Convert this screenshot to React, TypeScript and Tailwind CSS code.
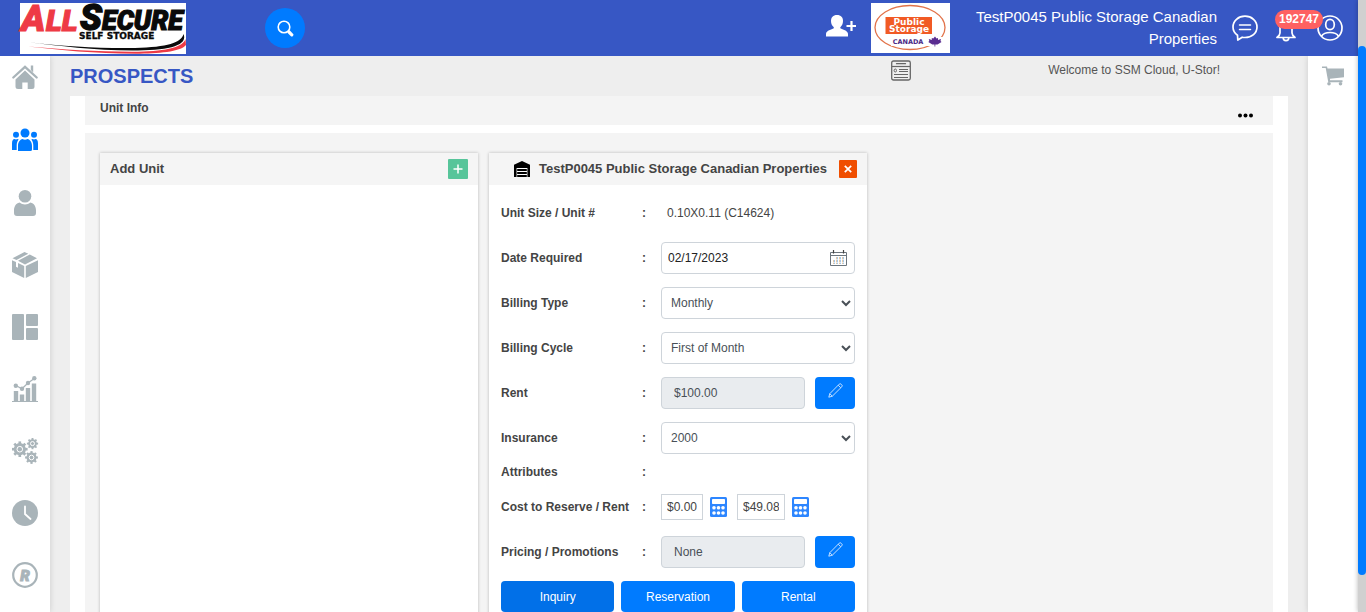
import type { ReactNode } from "react";

function AllSecureLogo() {
  return (
    <svg width="166" height="51" viewBox="0 0 166 51" role="img" aria-label="All Secure Self Storage" className="block overflow-visible bg-white">
      <g fontFamily="Roboto, 'Liberation Sans', sans-serif" fontWeight="900" fontStyle="italic">
        <g fill="#ee3a45" stroke="#ee3a45">
          <text x="1" y="28" fontSize="37" strokeWidth="1">A</text>
          <text x="26" y="28" fontSize="30" strokeWidth="1.2">LL</text>
        </g>
        <g fill="#0a0a0a" stroke="#0a0a0a">
          <text x="60" y="27" fontSize="36" strokeWidth="1.4">S</text>
          <text x="82" y="27" fontSize="27" strokeWidth="1.2">ECURE</text>
        </g>
      </g>
      <text x="59" y="36" fontSize="9" fontWeight="700" fontFamily="'DejaVu Sans', sans-serif" fill="#0a0a0a" stroke="#0a0a0a" strokeWidth=".3">SELF STORAGE</text>
      <path d="M7 39C45 43.500 80 45.500 115 45C148 44 161 40 163.500 31C168 42 151 47 118 47.500C78 48 40 43 7 39Z" fill="#0a0a0a" />
      <path d="M8 43.500C45 46.500 80 49 118 48.700C148 48 163 44 165.500 36L166 42C160 49 138 50.500 116 50.700C74 50.700 40 47 8 43.500Z" fill="#ee3a45" />
    </svg>
  );
}

function PublicStorageLogo() {
  return (
    <svg width="79" height="50" viewBox="0 0 79 50" role="img" aria-label="Public Storage Canada" className="block shrink-0 bg-white">
      <ellipse cx="39" cy="24.500" rx="35" ry="22" fill="none" stroke="#e2734a" strokeWidth="1.300" />
      <rect x="14.500" y="14" width="46.500" height="17" fill="#f15a24" />
      <g fontFamily="'DejaVu Sans', sans-serif" fontWeight="700" textAnchor="middle">
        <text x="38" y="21.500" fontSize="9" fill="#fff">Public</text>
        <text x="38" y="29" fontSize="9" fill="#fff">Storage</text>
        <rect x="20" y="34" width="54" height="9" fill="#fff" />
        <text x="37" y="41" fontSize="6.500" fill="#4b2a86">CANADA</text>
      </g>
      <path d="M64 33.500l1.500 2 1.500-.5v2l3-1-.5 2 1 1-4 2.500h-2.200v2h-.8v-2h-2.200l-4-2.500 1-1-.5-2 3 1v-2l1.500.5z" fill="#5a2d91" />
    </svg>
  );
}

const searchIcon = (
  <svg width="17" height="17" viewBox="0 0 17 17" fill="none" stroke="#fff" strokeLinecap="round">
    <circle cx="7" cy="7" r="5.800" strokeWidth="1.600" />
    <path d="M12 12l2.800 2.800" strokeWidth="3.200" />
  </svg>
);

const addUserIcon = (
  <svg width="31" height="24" viewBox="0 0 31 24" fill="#fff">
    <path d="M11 1c4 0 6 2.400 6 6 0 2.800-1.200 5-2.700 6.200v1c2.500 1.500 7.200 2 7.700 5.500v2.800H0v-2.800C.5 16.200 5.500 15.700 7.800 14.200v-1C6.200 12 5 9.800 5 7c0-3.600 2-6 6-6z" />
    <path d="M25.500 7v10M20.500 12h9.500" stroke="#fff" strokeWidth="2.200" />
  </svg>
);

const chatIcon = (
  <svg width="26" height="28" viewBox="0 0 26 28" fill="none" stroke="#fff" strokeWidth="1.700" strokeLinecap="round" strokeLinejoin="round">
    <path d="M5.500 21.200C2.600 19.200 1 16.300 1 13 1 6.800 6.300 2.200 13 2.200S25 6.800 25 13s-5.300 10.500-12 10.500c-1 0-2-.1-2.800-.3L5.800 26z" />
    <path d="M7.500 11h11M7.500 15.500h11" strokeWidth="1.500" />
  </svg>
);

const bellIcon = (
  <svg width="20" height="24" viewBox="0 0 20 24" fill="none" stroke="#fff" strokeWidth="1.700" strokeLinejoin="round">
    <path d="M10 2.500c-4 0-6 3-6 6.500v6c0 2-1 3-3 4.500h18c-2-1.500-3-2.500-3-4.500V9c0-3.500-2-6.500-6-6.500z" />
    <path d="M7.200 19.800a2.800 2.800 0 0 0 5.600 0" />
  </svg>
);

const profileIcon = (
  <svg width="26" height="26" viewBox="0 0 26 26" fill="none" stroke="#fff" strokeWidth="1.700">
    <circle cx="13" cy="13" r="12" />
    <ellipse cx="13" cy="9.500" rx="4.300" ry="5.200" />
    <path d="M4.500 21.200C6 18.800 9 17.500 13 17.500s7 1.300 8.500 3.700" />
  </svg>
);

const newsIcon = (
  <svg width="20" height="21" viewBox="0 0 20 21" fill="none" stroke="#666">
    <rect x=".7" y="1" width="18.600" height="19" rx="1.800" strokeWidth="1.300" />
    <path d="M1 6.500h18" strokeWidth="1.200" />
    <path d="M5.500 3.700h9" strokeWidth="1.300" strokeLinecap="round" />
    <ellipse cx="4.300" cy="10.500" rx="1.200" ry="1.500" strokeWidth="1" />
    <path d="M8 9.500h9M8 11.500h9M3 14.500h14M3 17.500h14" />
  </svg>
);

const cartIcon = (
  <svg width="22" height="20" viewBox="0 0 22 20" fill="#a9b4b9">
    <path d="M0 .5h5l.5 2H22v8.700L8 12.800v1.500h12.500v2H6.300L3.700 2H0z" />
    <circle cx="7" cy="17.700" r="1.800" />
    <circle cx="18.500" cy="17.700" r="1.800" />
  </svg>
);

function Gear({ x, y, r }: { x: number; y: number; r: number }) {
  return (
    <g transform={`translate(${x} ${y})`}>
      {[0, 45, 90, 135].map((a) => (
        <rect key={a} x={-r * 0.17} y={-r} width={r * 0.34} height={r * 2} transform={`rotate(${a})`} />
      ))}
      <circle r={r * 0.78} />
      <circle r={r * 0.36} fill="none" stroke="#fff" strokeWidth="1" />
    </g>
  );
}

const navItems: { label: string; active?: boolean; art: ReactNode }[] = [
  {
    label: "Home",
    art: (
      <>
        <path d="M1.300 11.500L13 .8l11.700 10.700" fill="none" stroke="currentColor" strokeWidth="2.300" strokeLinecap="round" />
        <path d="M18.800-.5h2.400v7l-2.400-2.500z" />
        <path d="M13 4.500l9.500 9v7A2.500 2.500 0 0 1 20 23h-4.300v-6.500h-5.400V23H6a2.500 2.500 0 0 1-2.500-2.500v-7z" />
      </>
    ),
  },
  {
    label: "Prospects",
    active: true,
    art: (
      <>
        <circle cx="13" cy="5" r="4.500" />
        <circle cx="4" cy="6.800" r="3" />
        <circle cx="22" cy="6.800" r="3" />
        <path d="M6 23v-5c0-4 2-6.500 4.500-7 1.500.9 3.500.9 5 0 2.500.5 4.500 3 4.500 7v3.500a1.500 1.500 0 0 1-1.500 1.500z" />
        <path d="M0 22v-6.500C0 12.500 1 11 2.500 11c1 .6 2 .6 3 0l1.200.5C5.300 13 4.700 15 4.700 17.500V22zM26 22v-6.500c0-3-1-4.500-2.500-4.500-1 .6-2 .6-3 0l-1.200.5c1.400 1.500 2 3.500 2 6V22z" />
      </>
    ),
  },
  {
    label: "Customers",
    art: (
      <>
        <circle cx="13" cy="6.300" r="6.300" />
        <path d="M7.500 12.500c3 2.500 8 2.500 11 0 3.500.8 5.500 4 5.500 8v2.500a3 3 0 0 1-3 3H5a3 3 0 0 1-3-3v-2.500c0-4 2-7.200 5.500-8z" />
      </>
    ),
  },
  {
    label: "Inventory",
    art: (
      <>
        <path d="M0 8.200l4 1.900v4.600l2 1v-4.700l6.200 3V26L0 20zM26 8.200V20l-12.200 6V14z" />
        <path d="M12.500 0l3.800 1.700L4.500 8 .5 6.300zM17.800 2.400L25 6.200 13 12.400 6 8.700z" />
      </>
    ),
  },
  {
    label: "Units",
    art: (
      <>
        <rect width="12" height="26" rx="1" />
        <rect x="14" width="12" height="12" rx="1" />
        <rect x="14" y="14" width="12" height="12" rx="1" />
      </>
    ),
  },
  {
    label: "Reports",
    art: (
      <>
        <path d="M0 25h26v1H0zM1.800 15h4.400v10H1.800zM7.800 18.500h4.400V25H7.800zM13.800 12h4.400v13h-4.400zM19.800 7.500h4.400V25h-4.400z" />
        <path d="M3.800 9.500l6.200 3.300 6-5.800 6.300-4.500" fill="none" stroke="currentColor" strokeWidth="1.300" />
        <circle cx="3.800" cy="9.700" r="2.200" />
        <circle cx="10" cy="12.800" r="2.200" />
        <circle cx="16" cy="7" r="2.200" />
        <circle cx="22.300" cy="2.300" r="2.200" />
      </>
    ),
  },
  {
    label: "Settings",
    art: (
      <>
        <Gear x={7.800} y={11.200} r={7.800} />
        <Gear x={20.500} y={5.600} r={5.600} />
        <Gear x={19.500} y={19.500} r={6.400} />
      </>
    ),
  },
  {
    label: "History",
    art: (
      <>
        <circle cx="13" cy="13" r="13" />
        <path d="M13 6.500v7.500l5.500 5" fill="none" stroke="#fff" strokeWidth="1.800" strokeLinecap="round" />
      </>
    ),
  },
  {
    label: "Registered",
    art: (
      <>
        <circle cx="13" cy="13" r="11.800" fill="none" stroke="currentColor" strokeWidth="2.200" />
        <text x="13" y="18.500" textAnchor="middle" fontSize="15" fontWeight="900" fontStyle="italic" fontFamily="Roboto, 'Liberation Sans', sans-serif" stroke="currentColor" strokeWidth="1">R</text>
      </>
    ),
  },
];

const warehouseIcon = (
  <svg width="16" height="16" viewBox="0 0 16 16" className="shrink-0">
    <path d="M8 0l8 3.800V16H0V3.800z" fill="#000" />
    <path d="M3 7.500h10M3 10.500h10M3 13.500h10" stroke="#fff" strokeWidth="1.200" />
    <path d="M2.800 7v9M13.200 7v9" stroke="#fff" strokeWidth=".6" />
  </svg>
);

const calendarIcon = (
  <svg width="17" height="16" viewBox="0 0 17 16" fill="none">
    <path d="M.5 2.500h16v13H.5z" stroke="#6c757d" />
    <path d="M.5 5.500h16" stroke="#6c757d" />
    <path d="M3.500 0v3.500M13.500 0v3.500" stroke="#444" strokeWidth="1.200" />
    <path d="M3.500 10v4M6.500 7v7M9.500 7v7M12.500 7v7" stroke="#e6c9a8" />
    <path d="M4.500 10v4M7.500 7v7M10.500 7v7M13.500 7v7" stroke="#a5c8e8" />
    <path d="M3 9.500h11M3 12.500h11" stroke="#fff" strokeWidth=".6" />
  </svg>
);

const pencilIcon = (
  <svg width="15" height="15" viewBox="0 0 15 15" fill="none" stroke="#d8eaff" strokeWidth=".9" strokeLinejoin="round">
    <path d="M.8 14.200l1-3.500L11.200 1.200a1.300 1.300 0 0 1 1.900 0l.7.7a1.300 1.300 0 0 1 0 1.900L4.300 13.200z" />
    <path d="M1.800 10.700l2.500 2.500M10.200 2.200l2.600 2.600" />
  </svg>
);

const calculatorIcon = (
  <svg width="17" height="20" viewBox="0 0 17 20">
    <rect width="17" height="20" rx="1.500" fill="#2d86ff" />
    <rect x="2" y="2" width="13" height="5" rx=".8" fill="#fff" />
    {[10.700, 16].map((y) => [4, 8.500, 13].map((x) => <circle key={`${x}-${y}`} cx={x} cy={y} r="1.800" fill="#fff" />))}
  </svg>
);

function Row({ label, htmlFor, className = "h-8", children }: { label: string; htmlFor?: string; className?: string; children?: ReactNode }) {
  return (
    <div className={`flex items-center ${className}`}>
      <label htmlFor={htmlFor} className="w-[141px] shrink-0 font-bold">{label}</label>
      <span className="w-[19px] shrink-0 font-bold">:</span>
      <div className="flex min-w-0 flex-1 items-center">{children}</div>
    </div>
  );
}

function Choice({ id, value }: { id: string; value: string }) {
  return (
    <select id={id} defaultValue={value} className="h-8 w-full rounded border border-[#ced4da] bg-white px-[5px] text-[#495057]">
      <option>{value}</option>
    </select>
  );
}

function LockedField({ id, value, action }: { id: string; value: string; action: string }) {
  return (
    <>
      <input id={id} readOnly defaultValue={value} className="h-8 min-w-0 flex-1 rounded border border-[#ced4da] bg-[#e9ecef] px-3 text-[#495057]" />
      <button type="button" aria-label={action} className="ml-2.5 flex h-8 w-10 shrink-0 justify-center rounded bg-[#007bff] pt-1.5">{pencilIcon}</button>
    </>
  );
}

export default function App() {
  return (
    <div className="flex h-screen overflow-hidden bg-[#eeeeee] font-['Liberation_Sans',Arial,sans-serif] text-xs text-[#444]">
      <div className="flex min-w-0 flex-1 flex-col">
        <header className="z-20 flex h-14 shrink-0 items-center bg-[#3757c4] pr-[15px] pl-5 text-white">
          <AllSecureLogo />
          <button aria-label="Search" className="ml-[79px] flex size-10 shrink-0 items-center justify-center rounded-full bg-[#007bff]">{searchIcon}</button>
          <div className="flex min-w-0 flex-1 items-center justify-end">
            <button aria-label="Add prospect" className="mr-3.5 pb-1">{addUserIcon}</button>
            <PublicStorageLogo />
            <p className="ml-[17px] w-[250px] text-right text-[15px] leading-[22px]">TestP0045 Public Storage Canadian Properties</p>
            <button aria-label="Messages" className="ml-[15px]">{chatIcon}</button>
            <button aria-label="Notifications" className="relative ml-[18px] pt-1">
              {bellIcon}
              <span className="absolute -top-1 -left-px rounded-full bg-[#fe6161] px-1 text-xs leading-[19px] font-bold">192747</span>
            </button>
            <button aria-label="Profile" className="ml-[21px]">{profileIcon}</button>
          </div>
        </header>

        <div className="flex min-h-0 flex-1">
          <nav aria-label="Main" className="z-10 flex w-[50px] shrink-0 flex-col items-center gap-9 bg-white pt-2.5 shadow-[0_0_6px_rgba(0,0,0,0.15)]">
            {navItems.map((item) => (
              <a key={item.label} href="#" aria-label={item.label} className={item.active ? "text-[#007bff]" : "text-[#a9b4b9]"}>
                <svg width="26" height="26" viewBox="0 0 26 26" fill="currentColor" className="block overflow-visible">{item.art}</svg>
              </a>
            ))}
          </nav>

          <main className="flex min-w-0 flex-1 flex-col px-5">
            <div className="flex h-10 shrink-0 items-start justify-between">
              <h1 className="pt-1 text-xl leading-8 font-bold text-[#3757c4]">PROSPECTS</h1>
              <div className="flex pr-[68px]">
                <button aria-label="News" className="mt-1 mr-[137px] h-[21px]">{newsIcon}</button>
                <p className="pt-1.5 leading-4 text-[#555]">Welcome to SSM Cloud, U-Stor!</p>
              </div>
            </div>

            <div className="flex min-h-0 flex-1 flex-col bg-white px-[15px]">
              <div className="mb-2 flex h-[29px] shrink-0 items-start justify-between bg-[#f4f4f4] pr-5 pl-[15px]">
                <h2 className="pt-1 leading-4 font-bold">Unit Info</h2>
                <button aria-label="More options" className="pt-4">
                  <svg width="16" height="6" viewBox="0 0 16 6" className="block"><circle cx="3" cy="3.500" r="2" /><circle cx="8.500" cy="3.500" r="2" /><circle cx="14" cy="3.500" r="2" /></svg>
                </button>
              </div>

              <div className="grid min-h-0 flex-1 grid-cols-3 gap-[11px] bg-[#f4f4f4] pt-5 pr-[17px] pl-[15px]">
                <section className="bg-white shadow-[0_0_3px_rgba(0,0,0,0.25)]">
                  <div className="flex h-8 items-center justify-between bg-[#f5f5f5] px-2.5">
                    <h3 className="text-[13px] font-bold">Add Unit</h3>
                    <button aria-label="Add unit" className="flex size-5 items-center justify-center rounded-[1px] bg-[#57c59a]">
                      <svg width="10" height="10" viewBox="0 0 10 10"><path d="M5 .5v9M.5 5h9" stroke="#fff" strokeWidth="1.500" /></svg>
                    </button>
                  </div>
                </section>

                <section className="bg-white shadow-[0_0_3px_rgba(0,0,0,0.25)]">
                  <div className="flex h-8 items-center justify-end bg-[#f5f5f5] px-2.5">
                    {warehouseIcon}
                    <h3 className="mr-3 ml-[9px] text-[13px] font-bold whitespace-nowrap">TestP0045 Public Storage Canadian Properties</h3>
                    <button aria-label="Remove unit" className="flex size-[18px] shrink-0 items-center justify-center rounded-[1px] bg-[#f04e00]">
                      <svg width="8" height="8" viewBox="0 0 8 8"><path d="M.8.8l6.400 6.400M7.200.8L.8 7.200" stroke="#fff" strokeWidth="1.700" /></svg>
                    </button>
                  </div>

                  <form className="flex flex-col gap-[13px] p-3" onSubmit={(e) => e.preventDefault()}>
                    <Row label="Unit Size / Unit #"><span className="pl-1.5">0.10X0.11 (C14624)</span></Row>
                    <Row label="Date Required" htmlFor="date">
                      <div className="flex h-8 w-full items-center rounded border border-[#ced4da] bg-white pr-[7px] pl-1.5">
                        <input id="date" defaultValue="02/17/2023" className="min-w-0 flex-1 text-[#222]" />
                        <button type="button" aria-label="Open calendar">{calendarIcon}</button>
                      </div>
                    </Row>
                    <Row label="Billing Type" htmlFor="type"><Choice id="type" value="Monthly" /></Row>
                    <Row label="Billing Cycle" htmlFor="cycle"><Choice id="cycle" value="First of Month" /></Row>
                    <Row label="Rent" htmlFor="rent"><LockedField id="rent" value="$100.00" action="Edit rent" /></Row>
                    <Row label="Insurance" htmlFor="insurance"><Choice id="insurance" value="2000" /></Row>
                    <Row label="Attributes" className="h-2.5" />
                    <Row label="Cost to Reserve / Rent" htmlFor="reserve" className="h-[33px]">
                      <input id="reserve" readOnly defaultValue="$0.00" className="h-[26px] w-[42px] border border-[#ced4da] px-[5px]" />
                      <button type="button" aria-label="Calculate reserve cost" className="mr-2.5 ml-[7px]">{calculatorIcon}</button>
                      <input aria-label="Cost to rent" readOnly defaultValue="$49.08" className="h-[26px] w-12 border border-[#ced4da] px-[5px]" />
                      <button type="button" aria-label="Calculate rent cost" className="ml-[7px]">{calculatorIcon}</button>
                    </Row>
                    <Row label="Pricing / Promotions" htmlFor="promo"><LockedField id="promo" value="None" action="Edit promotions" /></Row>
                    <div className="grid grid-cols-3 gap-[7px] text-white">
                      <button className="h-[31px] rounded bg-[#0170e8]">Inquiry</button>
                      <button className="h-[31px] rounded bg-[#007bff]">Reservation</button>
                      <button className="h-[31px] rounded bg-[#007bff]">Rental</button>
                    </div>
                  </form>
                </section>
              </div>
            </div>
          </main>

          <aside className="z-10 w-[50px] shrink-0 bg-white pt-2.5 pl-3.5 shadow-[0_0_6px_rgba(0,0,0,0.15)]">
            <a href="#" aria-label="Cart">{cartIcon}</a>
          </aside>
        </div>
      </div>

      <div aria-hidden="true" className="z-30 w-2 shrink-0 bg-[#d0d0d0] pt-[46px] shadow-[0_0_5px_rgba(0,0,0,0.3)]">
        <div className="h-[93.500%] rounded bg-[#007bff]" />
      </div>
    </div>
  );
}
